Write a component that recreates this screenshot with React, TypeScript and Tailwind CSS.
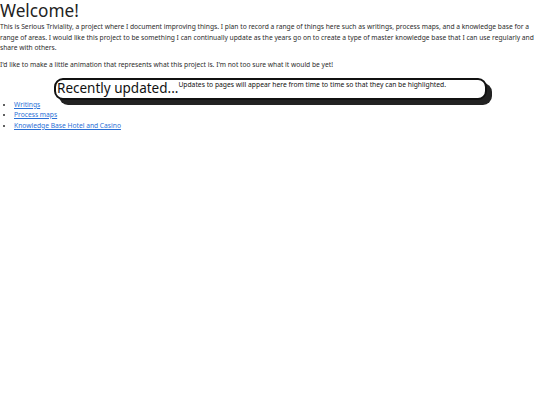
export default function App() {
  return (
    <div className="min-h-[405px] bg-white text-[#2b2b2b] font-['Noto_Sans',sans-serif]">
      <h1 className="text-[17.2px] leading-[22px] pt-[0px] text-[#222]">Welcome!</h1>
      <p className="text-[6.7px] leading-[10.5px] mt-[0px]">
        This is Serious Triviality, a project where I document improving things. I plan to record a range of things here such as writings, process maps, and a knowledge base for a range of areas. I would like this project to be something I can continually update as the years go on to create a type of master knowledge base that I can use regularly and share with others.
      </p>
      <p className="text-[6.7px] leading-[10.5px] mt-[6.5px]">
        I'd like to make a little animation that represents what this project is. I'm not too sure what it would be yet!
      </p>
      <div className="ml-[54px] mt-[7px] w-[433px] h-[22px] border-2 border-[#111] rounded-[9px] shadow-[5px_5px_0_#222] flex items-start overflow-hidden bg-white">
        <span className="text-[13.5px] leading-[17px] text-[#111] pl-[1px] whitespace-nowrap">Recently updated...</span>
        <span className="text-[6.75px] leading-[9px] text-[#111] mt-[0px] whitespace-nowrap">Updates to pages will appear here from time to time so that they can be highlighted.</span>
      </div>
      <ul className="list-disc pl-[14px] mt-[0px] text-[6.7px] leading-[10.5px]">
        <li><a href="#" className="text-[#2a6fd6] underline">Writings</a></li>
        <li><a href="#" className="text-[#2a6fd6] underline">Process maps</a></li>
        <li><a href="#" className="text-[#2a6fd6] underline">Knowledge Base Hotel and Casino</a></li>
      </ul>
    </div>
  );
}
